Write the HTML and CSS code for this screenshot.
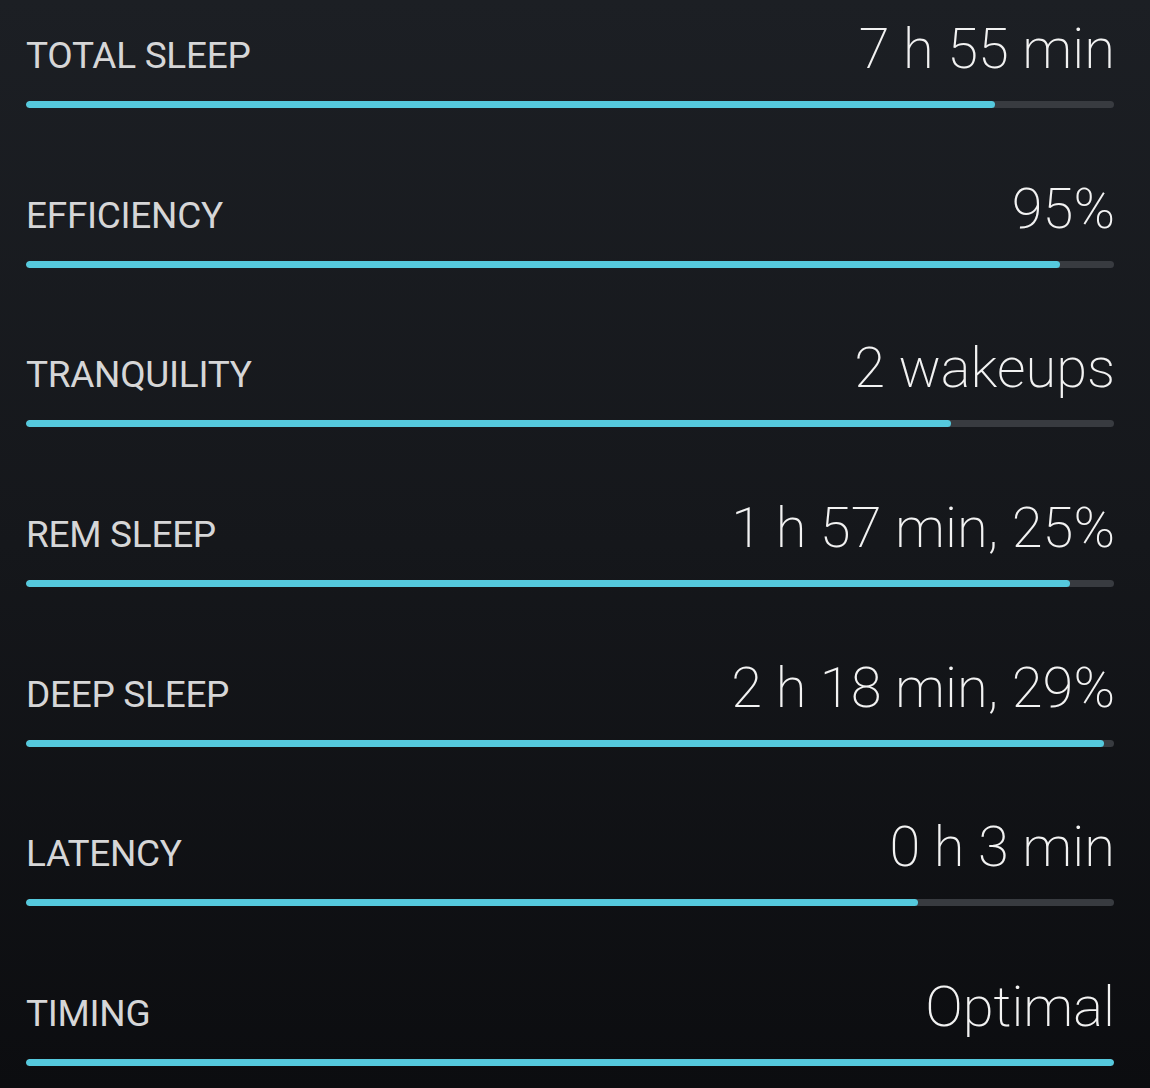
FILE: index.html
```html
<!DOCTYPE html>
<html lang="en">
  <head>
    <meta charset="utf-8" />
    <title>Sleep summary</title>
    <link rel="stylesheet" href="styles.css">
  </head>
  <body>
    <div class="stats">
      <div class="stat">
        <div class="stat-head">
          <span class="stat-label">TOTAL SLEEP</span>
          <span class="stat-value">7 h 55 min</span>
        </div>
        <div class="stat-track"><div class="stat-fill" style="width: 89.1%"></div></div>
      </div>
      <div class="stat">
        <div class="stat-head">
          <span class="stat-label">EFFICIENCY</span>
          <span class="stat-value">95%</span>
        </div>
        <div class="stat-track"><div class="stat-fill" style="width: 95%"></div></div>
      </div>
      <div class="stat">
        <div class="stat-head">
          <span class="stat-label">TRANQUILITY</span>
          <span class="stat-value">2 wakeups</span>
        </div>
        <div class="stat-track"><div class="stat-fill" style="width: 85%"></div></div>
      </div>
      <div class="stat">
        <div class="stat-head">
          <span class="stat-label">REM SLEEP</span>
          <span class="stat-value">1 h 57 min, 25%</span>
        </div>
        <div class="stat-track"><div class="stat-fill" style="width: 96%"></div></div>
      </div>
      <div class="stat">
        <div class="stat-head">
          <span class="stat-label">DEEP SLEEP</span>
          <span class="stat-value">2 h 18 min, 29%</span>
        </div>
        <div class="stat-track"><div class="stat-fill" style="width: 99.1%"></div></div>
      </div>
      <div class="stat">
        <div class="stat-head">
          <span class="stat-label">LATENCY</span>
          <span class="stat-value">0 h 3 min</span>
        </div>
        <div class="stat-track"><div class="stat-fill" style="width: 82%"></div></div>
      </div>
      <div class="stat">
        <div class="stat-head">
          <span class="stat-label">TIMING</span>
          <span class="stat-value">Optimal</span>
        </div>
        <div class="stat-track"><div class="stat-fill" style="width: 100%"></div></div>
      </div>
    </div>
  </body>
</html>
```

FILE: styles.css
```css
html, body {
  margin: 0;
  height: 100%;
}

body {
  background: linear-gradient(180deg, #1c1f24 0%, #15171b 50%, #0c0d10 100%);
  font-family: Roboto, "Liberation Sans", sans-serif;
  overflow: hidden;
}

.stats {
  display: flex;
  flex-direction: column;
  padding: 0 36px 0 26px;
}

.stat {
  box-sizing: border-box;
  height: 159.7px;
  padding-top: 21px;
}

.stat-head {
  display: flex;
  justify-content: space-between;
  align-items: baseline;
  height: 58px;
}

.stat-label {
  color: #d6d6d7;
  font-size: 37px;
  line-height: 1;
  letter-spacing: -0.3px;
}

.stat-value {
  color: #f2f2f2;
  font-size: 56px;
  font-weight: 200;
  line-height: 1;
  margin-right: -1px;
}

.stat-track {
  margin-top: 22px;
  height: 7px;
  border-radius: 4px;
  background: #383b40;
  overflow: hidden;
}

.stat-fill {
  height: 100%;
  border-radius: 4px;
  background: #55c9dd;
}
```
